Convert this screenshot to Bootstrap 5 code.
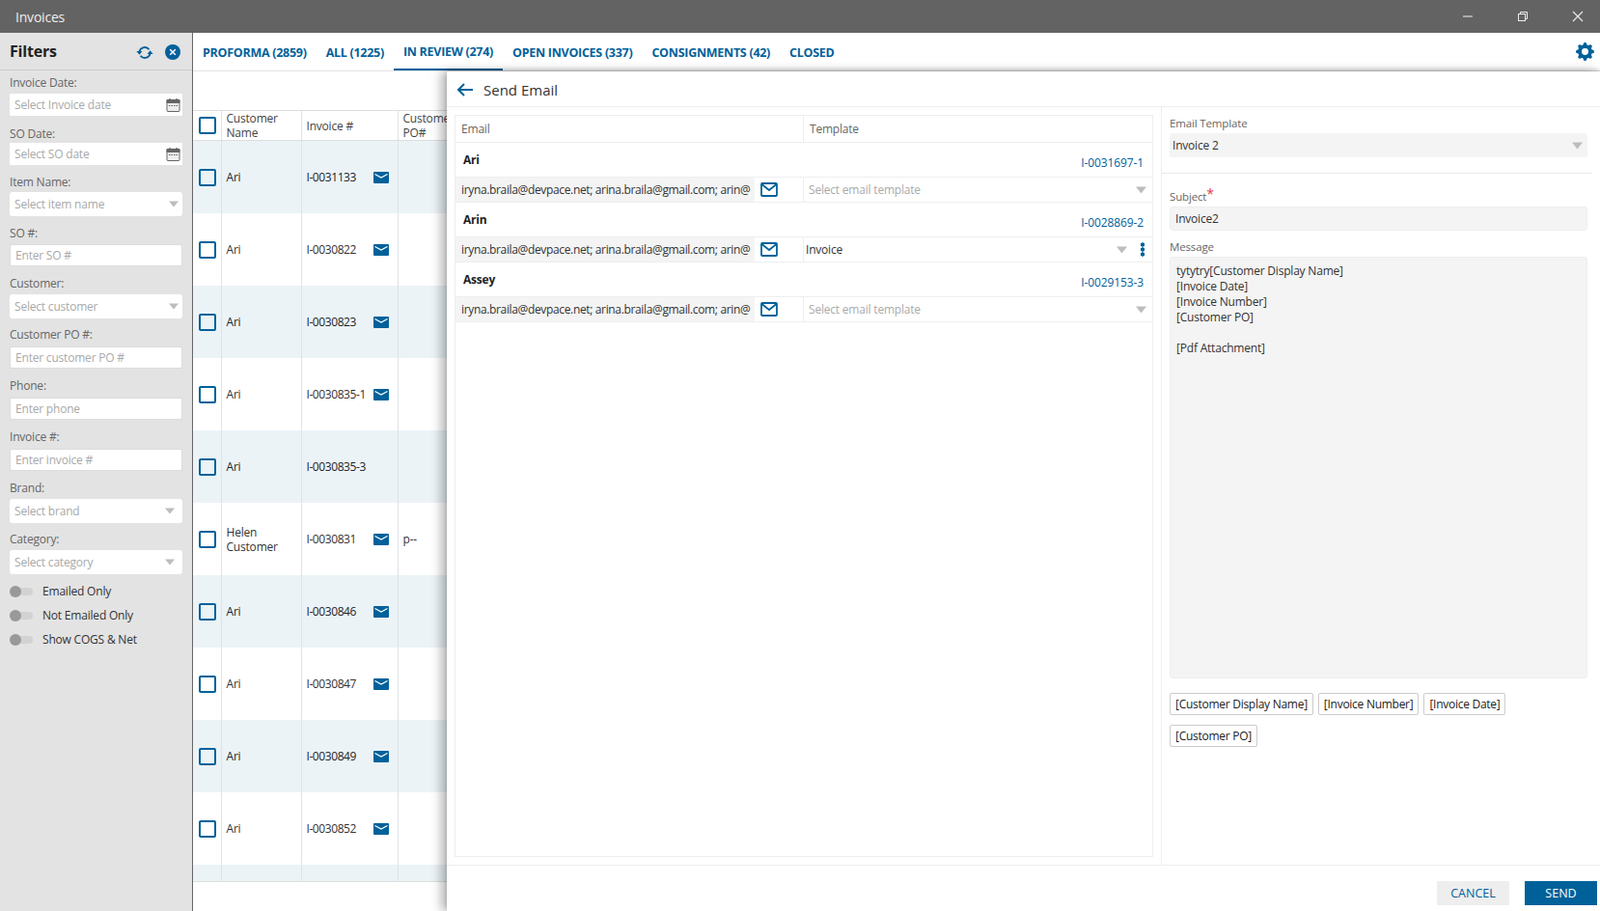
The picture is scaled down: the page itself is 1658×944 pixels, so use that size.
<!DOCTYPE html>
<html lang="en">
<head>
<meta charset="utf-8">
<title>Invoices</title>
<link href="https://cdn.jsdelivr.net/npm/bootstrap@5.3.3/dist/css/bootstrap.min.css" rel="stylesheet">
<style>
html, body { height: 944px; overflow: hidden; }
body { font-family: "Open Sans", "Liberation Sans", sans-serif; font-size: 12px; color: #333; position: relative; letter-spacing: -0.2px; }
.title-bar { height: 34px; background: #636363; color: #eee; font-size: 14px; padding-left: 16px; }
.win-btns { gap: 11px; }
.win-btn { width: 46px; display: flex; justify-content: center; }
.app-body { height: 910px; }

/* filters */
.filter-side { width: 200px; background: #e3e3e3; border-right: 1px solid #666; flex: none; }
.filter-head { height: 39px; border-bottom: 1px solid #ccc; padding: 2px 12px 0 10px; }
.filter-head h1 { font-size: 16px; font-weight: 700; color: #222; margin: 0; letter-spacing: -0.2px; }
.filter-body { padding: 0 10px; }
.filter-label { display: block; height: 19px; line-height: 19px; margin: 0; color: #666; font-size: 12px; }
.filter-group { height: 53px; padding-top: 5px; }
.filter-group.date-one { height: 51px; }
.filter-group.date-one .filter-label { line-height: 16px; }
.filter-group.date-two { height: 50px; }
.filter-group.short-one { height: 52px; }
.filter-input.form-control, .filter-input.form-select { height: 23px; min-height: 0; font-size: 12px; border-radius: 0; border: 0; padding: 0 5px; color: #333; letter-spacing: inherit; }
.filter-input.form-control::placeholder { color: #a9a9a9; }
.filter-text.form-control { border: 1px solid #dcdcdc; border-radius: 2px; padding-left: 5px; margin-top: 2px; }
.filter-text.low-top.form-control { margin-top: 3px; }
.filter-input.form-select { height: 25px; margin-top: 2px; border-radius: 3px; color: #a9a9a9; background-size: 10px 7px; background-position: right 4px center; }
.filter-input.form-select.tight-top { margin-top: 1px; }
.filter-input.form-select.caret-in { background-position: right 8px center; }
.form-select { --bs-form-select-bg-img: url("data:image/svg+xml,%3csvg xmlns='http://www.w3.org/2000/svg' viewBox='0 0 13 8'%3e%3cpath fill='%23bdbdbd' d='M0 0h13L6.5 8z'/%3e%3c/svg%3e"); }
.date-wrap { position: relative; }
.date-wrap svg { position: absolute; right: 2px; top: 4px; }
.toggle-list { margin-top: 3px; }
.toggle-row { height: 25px; margin: 0; padding: 0; gap: 10px; display: flex; align-items: center; color: #333; }
.toggle-row .form-check-input { width: 24px; height: 8px; margin: 0; border: 0; background-color: #d2d2d2; border-radius: 4px; background-image: none; position: relative; float: none; }
.toggle-row .form-check-input::after { content: ""; position: absolute; left: 0; top: -2px; width: 12px; height: 12px; border-radius: 50%; background: #999; }

/* main list */
.main-area { min-width: 0; }
.tab-strip { height: 40px; border-bottom: 1px solid #e2e2e2; position: relative; }
.tab-strip .nav-link { color: #00619a; font-weight: 700; font-size: 12.5px; padding: 0 10px; height: 39px; line-height: 41px; border-bottom: 2px solid transparent; letter-spacing: -0.28px; }
.tab-strip .nav-link.active { border-bottom-color: #00619a; line-height: 39px; }
.tab-strip svg { position: absolute; right: 6px; top: 10px; }
.list-gap { height: 40px; }
.invoice-table { width: 800px; table-layout: fixed; margin: 0; --bs-table-striped-bg: #ebf3f7; --bs-table-border-color: #e0e4e6; border-top: 1px solid #ddd; border-bottom: 1px solid #ddd; font-size: 12px; }
.invoice-table > :not(caption) > * > * { padding: 0 6px; vertical-align: middle; border-bottom: 0; color: #333; border-right: 1px solid #dde3e6; line-height: 15px; }
.invoice-table > :not(caption) > * > *:not(:first-child) { padding-left: 5px; }
.invoice-table thead tr { height: 31px; }
.invoice-table thead th { font-weight: 400; border-bottom: 1px solid #ddd; color: #444; }
.invoice-table tbody tr { height: 75px; }
.invoice-table tbody td { padding-top: 1px; }
.invoice-table tbody tr.part-row { height: 18px; }
.pick-box { display: block; width: 18px; height: 18px; border: 2px solid #00619a; border-radius: 2px; background: transparent; }
.col-pick { width: 29px; }
.col-name { width: 83px; }
.col-inv { width: 100px; }
.col-po { width: 66px; }
.inv-cell { display: flex; justify-content: space-between; align-items: center; padding-right: 3px; letter-spacing: -0.42px; }

/* send email panel */
.email-panel { position: absolute; left: 463px; top: 74px; right: 0; bottom: 0; background: #fff; box-shadow: -6px 0 10px rgba(0,0,0,.28), 0 -2px 4px rgba(0,0,0,.15); display: flex; flex-direction: column; }
.panel-head { height: 37px; border-bottom: 1px solid #eee; padding: 1px 0 0 10px; gap: 8px; flex: none; }
.panel-head h2 { font-size: 15px; font-weight: 400; color: #333; margin: 0; letter-spacing: 0; }
.panel-main { flex: 1; min-height: 0; }
.recipients { width: 741px; flex: none; padding: 8px; border-right: 1px solid #eee; }
.recipient-box { height: 769px; border: 1px solid #eee; }
.box-head { height: 28px; border-bottom: 1px solid #eee; color: #666; }
.box-head > div { padding-left: 6px; line-height: 27px; }
.cell-left { width: 361px; flex: none; border-right: 1px solid #eee; }
.cell-right { flex: 1; min-width: 0; }
.name-row { height: 36px; border-bottom: 1px solid #eee; padding: 0 9px 0 8px; }
.name-row b { font-weight: 700; color: #222; position: relative; }
.name-row a { color: #00619a; text-decoration: none; position: relative; top: 3px; letter-spacing: -0.1px; }
.mail-row { height: 26px; border-bottom: 1px solid #eee; }
.mail-row .cell-left { display: flex; align-items: center; height: 25px; }
.mail-field.form-control { width: 310px; flex: none; height: 25px; padding: 0 0 0 6px; border: 0; border-radius: 2px; background: #f4f4f4; font-size: 12px; color: #333; letter-spacing: -0.35px; }
.mail-row .cell-left svg { margin-left: 6px; }
.tpl-select.form-select { height: 25px; border: 0; border-radius: 0; font-size: 12px; padding: 0 5px; color: #aaa; background-size: 11px 8px; background-position: right 6px center; letter-spacing: inherit; }
.tpl-select.chosen { color: #333; padding-left: 2px; background-position: right 26px center; }
.kebab { position: absolute; right: 8px; top: 5px; width: 4px; height: 15px; background: radial-gradient(circle, #00619a 2px, transparent 2.2px) 0 0 / 4px 5px; }
.tpl-wrap { position: relative; }

.mail-side { flex: 1; min-width: 0; padding: 0 13px 0 8px; }
.side-label { display: block; color: #666; margin: 0; height: 20px; line-height: 20px; font-size: 11.5px; letter-spacing: -0.15px; }
.first-label { margin-top: 7px; }
.msg-label { margin-top: 7px; }
.side-input.form-control, .side-input.form-select { background-color: #f4f4f4; border: 1px solid #eee; border-radius: 3px; height: 25px; min-height: 0; padding: 0 5px; font-size: 12px; color: #333; letter-spacing: inherit; }
.side-input.form-select { border: 0; padding-left: 3px; background-size: 11px 8px; background-position: right 5px center; }
.side-rule { border-top: 1px solid #e8e8e8; margin: 16px -5px 14px -8px; }
.req-star { color: #e63946; font-size: 14px; line-height: 10px; position: relative; top: -2px; }
.msg-box.form-control { height: 437px; resize: none; line-height: 16px; padding: 6px; border-radius: 3px; background: #f4f4f4; border: 1px solid #eee; font-size: 12px; color: #333; letter-spacing: inherit; }
.token-wrap { gap: 10px 5px; margin-top: 15px; }
.token-btn.btn { height: 23px; padding: 0 5px; font-size: 12px; line-height: 20px; color: #222; background: #fff; border: 1px solid #ccc; border-radius: 2px; letter-spacing: -0.27px; }
.panel-foot { height: 48px; flex: none; border-top: 1px solid #eee; padding: 16px 3px 0 0; gap: 16px; }
.foot-btn.btn { width: 75px; height: 25px; padding: 0; font-size: 12.5px; line-height: 25px; border: 0; border-radius: 0; }
.foot-cancel.btn { background: #eee; color: #00619a; }
.foot-send.btn { background: #00619a; color: #fff; }
</style>
</head>
<body>
<div class="title-bar d-flex align-items-center justify-content-between">
  <span>Invoices</span>
  <div class="d-flex win-btns">
    <div class="win-btn"><svg width="12" height="12" viewBox="0 0 12 12"><path d="M1 6h10" stroke="#ddd" stroke-width="1.2"/></svg></div>
    <div class="win-btn"><svg width="12" height="12" viewBox="0 0 12 12" fill="none" stroke="#eee"><rect x="1.5" y="3.5" width="7" height="7"/><path d="M3.5 3.5v-2h7v7h-2"/></svg></div>
    <div class="win-btn"><svg width="12" height="12" viewBox="0 0 12 12"><path d="M1 1l10 10M11 1L1 11" stroke="#eee" stroke-width="1.1"/></svg></div>
  </div>
</div>

<div class="app-body d-flex">
  <aside class="filter-side">
    <div class="filter-head d-flex align-items-center justify-content-between">
      <h1>Filters</h1>
      <div class="d-flex align-items-center gap-2">
        <svg class="me-1" width="18" height="15" viewBox="0 0 18 15" fill="none" stroke="#00619a" stroke-width="1.9"><path d="M3.5 7.5A5.5 5.5 0 0 1 13.4 4.2"/><path d="M14.5 7.5A5.5 5.5 0 0 1 4.6 10.8"/><path d="M0.4 6h6L3.4 9.8z" fill="#00619a" stroke="none"/><path d="M11.6 9h6L14.6 5.2z" fill="#00619a" stroke="none"/></svg>
        <svg width="16" height="16" viewBox="0 0 16 16"><circle cx="8" cy="8" r="8" fill="#00619a"/><path d="M5.2 5.2l5.6 5.6M10.8 5.2l-5.6 5.6" stroke="#fff" stroke-width="1.5"/></svg>
      </div>
    </div>
    <div class="filter-body">
      <div class="filter-group date-one"><label class="filter-label">Invoice Date:</label>
        <div class="date-wrap"><input class="form-control filter-input" placeholder="Select Invoice date">
          <svg width="15" height="15" viewBox="0 0 15 15" fill="none" stroke="#666"><rect x="1" y="2.5" width="13" height="12" rx="1" fill="#eee"/><path d="M1 2.5h13v3H1z" fill="#666"/><path d="M4 1v2M11 1v2" stroke-width="1.4"/><path d="M3 8.5h9" stroke-dasharray="1.5 1"/></svg></div></div>
      <div class="filter-group date-two"><label class="filter-label">SO Date:</label>
        <div class="date-wrap"><input class="form-control filter-input" placeholder="Select SO date">
          <svg width="15" height="15" viewBox="0 0 15 15" fill="none" stroke="#666"><rect x="1" y="2.5" width="13" height="12" rx="1" fill="#eee"/><path d="M1 2.5h13v3H1z" fill="#666"/><path d="M4 1v2M11 1v2" stroke-width="1.4"/><path d="M3 8.5h9" stroke-dasharray="1.5 1"/></svg></div></div>
      <div class="filter-group"><label class="filter-label">Item Name:</label>
        <select class="form-select filter-input tight-top"><option>Select item name</option></select></div>
      <div class="filter-group short-one"><label class="filter-label">SO #:</label>
        <input class="form-control filter-input filter-text" placeholder="Enter SO #"></div>
      <div class="filter-group"><label class="filter-label">Customer:</label>
        <select class="form-select filter-input"><option>Select customer</option></select></div>
      <div class="filter-group"><label class="filter-label">Customer PO #:</label>
        <input class="form-control filter-input filter-text low-top" placeholder="Enter customer PO #"></div>
      <div class="filter-group"><label class="filter-label">Phone:</label>
        <input class="form-control filter-input filter-text low-top" placeholder="Enter phone"></div>
      <div class="filter-group"><label class="filter-label">Invoice #:</label>
        <input class="form-control filter-input filter-text low-top" placeholder="Enter invoice #"></div>
      <div class="filter-group"><label class="filter-label">Brand:</label>
        <select class="form-select filter-input caret-in"><option>Select brand</option></select></div>
      <div class="filter-group"><label class="filter-label">Category:</label>
        <select class="form-select filter-input caret-in"><option>Select category</option></select></div>
      <div class="toggle-list">
        <div class="form-check form-switch toggle-row"><input class="form-check-input" type="checkbox" role="switch"><label>Emailed Only</label></div>
        <div class="form-check form-switch toggle-row"><input class="form-check-input" type="checkbox" role="switch"><label>Not Emailed Only</label></div>
        <div class="form-check form-switch toggle-row"><input class="form-check-input" type="checkbox" role="switch"><label>Show COGS &amp; Net</label></div>
      </div>
    </div>
  </aside>

  <main class="main-area flex-fill">
    <nav class="nav tab-strip">
      <a class="nav-link" href="#">PROFORMA (2859)</a>
      <a class="nav-link" href="#">ALL (1225)</a>
      <a class="nav-link active" href="#">IN REVIEW (274)</a>
      <a class="nav-link" href="#">OPEN INVOICES (337)</a>
      <a class="nav-link" href="#">CONSIGNMENTS (42)</a>
      <a class="nav-link" href="#">CLOSED</a>
      <svg width="19" height="19" viewBox="0 0 16 16"><path fill="#00619a" fill-rule="evenodd" d="M9.405 1.05c-.413-1.4-2.397-1.4-2.81 0l-.1.34a1.464 1.464 0 0 1-2.105.872l-.31-.17c-1.283-.698-2.686.705-1.987 1.987l.169.311c.446.82.023 1.841-.872 2.105l-.34.1c-1.4.413-1.4 2.397 0 2.81l.34.1a1.464 1.464 0 0 1 .872 2.105l-.17.31c-.698 1.283.705 2.686 1.987 1.987l.311-.169a1.464 1.464 0 0 1 2.105.872l.1.34c.413 1.4 2.397 1.4 2.81 0l.1-.34a1.464 1.464 0 0 1 2.105-.872l.31.17c1.283.698 2.686-.705 1.987-1.987l-.169-.311a1.464 1.464 0 0 1 .872-2.105l.34-.1c1.4-.413 1.4-2.397 0-2.81l-.34-.1a1.464 1.464 0 0 1-.872-2.105l.17-.31c.698-1.283-.705-2.686-1.987-1.987l-.311.169a1.464 1.464 0 0 1-2.105-.872l-.1-.34zM8 10.93a2.929 2.929 0 1 1 0-5.86 2.929 2.929 0 0 1 0 5.858z"/></svg>
    </nav>
    <div class="list-gap"></div>
    <table class="table table-striped invoice-table">
      <thead>
        <tr><th class="col-pick"><span class="pick-box"></span></th><th class="col-name">Customer Name</th><th class="col-inv">Invoice #</th><th class="col-po">Customer PO#</th><th></th></tr>
      </thead>
      <tbody id="invoiceRows"></tbody>
    </table>
  </main>
</div>

<section class="email-panel">
  <div class="panel-head d-flex align-items-center">
    <svg width="20" height="14" viewBox="0 0 20 14" fill="none" stroke="#00619a" stroke-width="2"><path d="M17 7H2M8 1L2 7l6 6"/></svg>
    <h2>Send Email</h2>
  </div>
  <div class="panel-main d-flex">
    <div class="recipients">
      <div class="recipient-box">
        <div class="box-head d-flex"><div class="cell-left">Email</div><div class="cell-right">Template</div></div>
        <div id="recipientRows"></div>
      </div>
    </div>
    <div class="mail-side">
      <label class="side-label first-label">Email Template</label>
      <select class="form-select side-input"><option>Invoice 2</option></select>
      <div class="side-rule"></div>
      <label class="side-label">Subject<span class="req-star">*</span></label>
      <input class="form-control side-input" value="Invoice2">
      <label class="side-label msg-label">Message</label>
      <textarea class="form-control msg-box">tytytry[Customer Display Name]
[Invoice Date]
[Invoice Number]
[Customer PO]

[Pdf Attachment]</textarea>
      <div class="d-flex flex-wrap token-wrap">
        <button class="btn token-btn">[Customer Display Name]</button>
        <button class="btn token-btn">[Invoice Number]</button>
        <button class="btn token-btn">[Invoice Date]</button>
        <button class="btn token-btn">[Customer PO]</button>
      </div>
    </div>
  </div>
  <div class="panel-foot d-flex justify-content-end">
    <button class="btn foot-btn foot-cancel">CANCEL</button>
    <button class="btn foot-btn foot-send">SEND</button>
  </div>
</section>

<script>
  const invoices = [
    ['Ari', 'I-0031133', 1, ''], ['Ari', 'I-0030822', 1, ''], ['Ari', 'I-0030823', 1, ''],
    ['Ari', 'I-0030835-1', 1, ''], ['Ari', 'I-0030835-3', 0, ''], ['Helen Customer', 'I-0030831', 1, 'p--'],
    ['Ari', 'I-0030846', 1, ''], ['Ari', 'I-0030847', 1, ''], ['Ari', 'I-0030849', 1, ''], ['Ari', 'I-0030852', 1, '']
  ];
  const envelope = '<svg width="16" height="12" viewBox="0 0 16 12"><rect width="16" height="12" rx="1" fill="#00619a"/><path d="M1.5 2.5L8 6l6.5-3.5" fill="none" stroke="#fff" stroke-width="1.2"/></svg>';
  document.getElementById('invoiceRows').innerHTML = invoices.map(r => `
    <tr><td><span class="pick-box"></span></td><td>${r[0]}</td>
    <td><div class="inv-cell"><span>${r[1]}</span>${r[2] ? envelope : ''}</div></td><td>${r[3]}</td><td></td></tr>`).join('')
    + '<tr class="part-row"><td></td><td></td><td></td><td></td><td></td></tr>';

  const recipients = [
    ['Ari', 'I-0031697-1', ''], ['Arin', 'I-0028869-2', 'Invoice'], ['Assey', 'I-0029153-3', '']
  ];
  const outline = '<svg width="18" height="15" viewBox="0 0 18 15" fill="none" stroke="#00619a" stroke-width="1.8"><rect x="1" y="1" width="16" height="13" rx="1"/><path d="M1.5 2L9 8l7.5-6"/></svg>';
  document.getElementById('recipientRows').innerHTML = recipients.map(r => `
    <div class="name-row d-flex justify-content-between align-items-center"><b>${r[0]}</b><a href="#">${r[1]}</a></div>
    <div class="mail-row d-flex">
      <div class="cell-left"><input class="form-control mail-field" value="iryna.braila@devpace.net; arina.braila@gmail.com; arin@">${outline}</div>
      <div class="cell-right tpl-wrap">
        <select class="form-select tpl-select ${r[2] ? 'chosen' : ''}"><option>${r[2] || 'Select email template'}</option></select>
        ${r[2] ? '<span class="kebab"></span>' : ''}
      </div>
    </div>`).join('');
</script>
<script src="https://cdn.jsdelivr.net/npm/bootstrap@5.3.3/dist/js/bootstrap.bundle.min.js"></script>
</body>
</html>
